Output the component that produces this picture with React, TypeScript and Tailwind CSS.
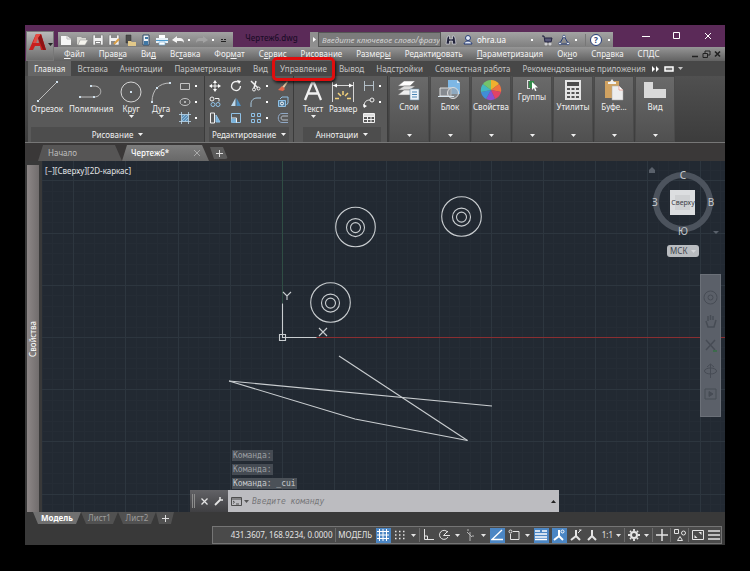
import { ReactNode } from 'react';

const menus = [
  ['', 'Ф', 'айл'],
  ['Прав', 'к', 'а'],
  ['Ви', 'д', ''],
  ['Вс', 'т', 'авка'],
  ['Фор', 'м', 'ат'],
  ['С', 'е', 'рвис'],
  ['', 'Р', 'исование'],
  ['Размер', 'ы', ''],
  ['Редакти', 'р', 'овать'],
  ['', 'П', 'араметризация'],
  ['Ок', 'н', 'о'],
  ['Спр', 'а', 'вка'],
  ['СПДС', '', ''],
];

const ribbonTabs = [
  'Главная',
  'Вставка',
  'Аннотации',
  'Параметризация',
  'Вид',
  'Управление',
  'Вывод',
  'Надстройки',
  'Совместная работа',
  'Рекомендованные приложения',
];

type IconProps = { w?: number; h?: number; children: ReactNode; className?: string };

function Icon({ w = 12, h = 12, children, className = '' }: IconProps) {
  return (
    <svg
      width={w}
      height={h}
      viewBox={`0 0 ${w} ${h}`}
      fill="none"
      stroke="currentColor"
      className={`shrink-0 ${className}`}
      aria-hidden="true"
    >
      {children}
    </svg>
  );
}

function Caret({ className = '' }: { className?: string }) {
  return (
    <Icon w={5} h={3} className={className}>
      <path d="M0 0h5L2.5 3z" fill="currentColor" stroke="none" />
    </Icon>
  );
}

function QuickAccess() {
  return (
    <div className="ml-1 flex h-[15px] items-center gap-1 self-end bg-gradient-to-b from-[#a3a3a3] to-[#7b7b7b] pr-1 pl-[2px] text-[#eeeeee]">
      <button aria-label="Создать">
        <Icon>
          <path d="M1 2h6l4 3v6H1z" fill="#f6f6f6" stroke="none" />
          <path d="M7 2v3h4" stroke="#bbb" />
        </Icon>
      </button>
      <button aria-label="Открыть">
        <Icon>
          <path d="M1 10V3h4l1 1h4v2H4l-2 5z" fill="#d9d9d4" stroke="none" />
          <path d="M4 6h8l-3 5H2z" fill="#f5f4ee" stroke="#999" strokeWidth=".5" />
        </Icon>
      </button>
      <button aria-label="Сохранить">
        <Icon>
          <path d="M1 1h10v10H1z" fill="#f1f1f1" stroke="#777" strokeWidth=".6" />
          <path d="M3 1h6v3H3zM3 7h6v4H3z" fill="#8a8a8a" stroke="none" />
          <path d="M4 8.5h4" stroke="#fff" />
        </Icon>
      </button>
      <button aria-label="Сохранить как">
        <Icon>
          <path d="M1 1h10v10H1z" fill="#f1f1f1" stroke="#777" strokeWidth=".6" />
          <path d="M3 1h6v3H3zM3 7h4v4H3z" fill="#8a8a8a" stroke="none" />
          <path d="M6 10l5-5" stroke="#d99e46" strokeWidth="2" />
        </Icon>
      </button>
      <button aria-label="Открыть из облака">
        <Icon>
          <path d="M2 1h5v8H2z" fill="#4b4b4b" stroke="#333" strokeWidth=".5" />
          <path d="M4 7h3l1 1h4v4H4z" fill="#e2c889" stroke="none" />
        </Icon>
      </button>
      <button aria-label="Сохранить в облаке">
        <Icon>
          <path d="M3 1h6v10H3z" fill="#f0f4f8" stroke="#2f4b68" />
          <path d="M5 3h3v2H5zM4 7h4v4H4z" fill="#3f77a5" stroke="none" />
        </Icon>
      </button>
      <button aria-label="Печать">
        <Icon>
          <path d="M3 1h6v3H3z" fill="#fff" stroke="none" />
          <path d="M0 4h12v5H0z" fill="#e8f1f8" stroke="none" />
          <path d="M0 6.5h12" stroke="#4d9cd0" />
          <path d="M3 8h6v3H3z" fill="#fff" stroke="#6aa9d3" strokeWidth=".6" />
        </Icon>
      </button>
      <button aria-label="Отменить" className="flex items-center gap-1">
        <Icon>
          <path d="M0 6l5-4v2h2c4 0 5 2 5 5-1-2-2-2-5-2H5v2z" fill="#f4f4f4" stroke="none" />
        </Icon>
        <span className="size-[2px] bg-white" />
      </button>
      <button aria-label="Повторить" className="ml-[2px] flex items-center gap-1 text-[#a3a3a3]">
        <Icon>
          <path d="M12 6L7 2v2H5C1 4 0 6 0 9c1-2 2-2 5-2h2v2z" fill="currentColor" stroke="none" />
        </Icon>
        <span className="size-[2px] bg-white" />
      </button>
      <button aria-label="Настройка панели">
        <Icon w={11}>
          <path d="M3 5.5h2M6 5.5h2M3 7.5h5" stroke="#222" />
        </Icon>
      </button>
    </div>
  );
}

function InfoCenter() {
  return (
    <div className="flex h-[15px] w-[172px] items-center self-end bg-gradient-to-b from-[#a3a3a3] to-[#7f7f7f] text-white">
      <button aria-label="Поиск" className="ml-1">
        <Icon>
          <path d="M1 10l1-6 1-2h1.5v3h3V2H9l1 2 1 6H7.5V7h-3v3z" fill="#22233a" stroke="#e8e8f0" strokeWidth=".6" />
        </Icon>
      </button>
      <button className="ml-[5px] flex items-center gap-[3px]">
        <Icon>
          <circle cx="6" cy="4" r="2.5" fill="#dfe7f5" stroke="#273d77" />
          <path d="M2 10c1-4 7-4 8 0z" fill="#dfe7f5" stroke="#273d77" />
        </Icon>
        ohra.ua
      </button>
      <span className="mr-1 ml-auto size-[2px] bg-white" />
      <button aria-label="Магазин приложений" className="ml-1">
        <Icon>
          <path d="M1 2h2l1 6h6l1-4H4" fill="#59597a" stroke="#22233f" />
          <circle cx="5" cy="10" r="1" fill="#22233f" />
          <circle cx="9" cy="10" r="1" fill="#22233f" />
        </Icon>
      </button>
      <button aria-label="Autodesk" className="ml-[5px] flex items-center gap-[5px]">
        <Icon>
          <path d="M6 2l4.5 8h-9z" stroke="#273d77" />
          <circle cx="6" cy="2.5" r="1.3" fill="#fff" stroke="#273d77" strokeWidth=".7" />
          <circle cx="2" cy="9.5" r="1.3" fill="#fff" stroke="#273d77" strokeWidth=".7" />
          <circle cx="10" cy="9.5" r="1.3" fill="#fff" stroke="#273d77" strokeWidth=".7" />
        </Icon>
        <span className="size-[2px] bg-white" />
      </button>
      <span className="mr-1 ml-2 h-3 w-px bg-[#777777]" />
      <button aria-label="Справка" className="mr-[3px] flex items-center gap-[6px]">
        <span className="flex size-[12px] items-center justify-center rounded-full border border-[#273d77] bg-white text-[8px] font-bold text-[#273d77]">
          ?
        </span>
        <span className="size-[2px] bg-white" />
      </button>
    </div>
  );
}

function Header() {
  return (
    <header className="flex bg-[#5b2a58]">
      <button
        aria-label="Меню приложения"
        className="mt-[6px] ml-px flex h-[30px] w-7 items-start gap-px border border-[#777777] bg-gradient-to-b from-[#b9b9b9] to-[#6d6d6d] pt-px pl-[2px]"
      >
        <svg width="18" height="18" viewBox="0 0 18 18" aria-hidden="true">
          <path d="M0 17L7 1h5l5 16h-5l-1-4H6l-2 4z" fill="#c8201f" />
          <path d="M7 1h5l-5 9H4z" fill="#e44c43" />
          <path d="M9 5l-2 5h3z" fill="#9d8585" />
          <path d="M12 1l5 16h-3L9 5z" fill="#8e1214" />
        </svg>
        <Caret className="mt-[10px] text-[#222222]" />
      </button>
      <div className="flex min-w-0 grow flex-col">
        <div className="flex h-[22px]">
          <QuickAccess />
          <h1 className="w-[77px] self-end pb-[3px] text-center font-medium text-[#1d0d29]">Чертеж6.dwg</h1>
          <button
            aria-label="Развернуть поиск"
            className="flex h-[15px] w-2 items-center justify-center self-end bg-[#8f8f8f] text-white"
          >
            <Icon w={3} h={5}>
              <path d="M0 0v5l3-2.5z" fill="currentColor" stroke="none" />
            </Icon>
          </button>
          <input
            aria-label="Поиск"
            placeholder="Введите ключевое слово/фразу"
            className="h-[15px] w-0 grow self-end border border-[#555555] bg-[#7b7b7b] pl-[3px] italic placeholder:text-[#d2d2d2]"
          />
          <InfoCenter />
          <div className="flex w-[112px] items-center justify-between pr-[13px] pl-[29px] text-white">
            <button aria-label="Свернуть">
              <Icon w={8} h={8}>
                <path d="M0 4.5h8" />
              </Icon>
            </button>
            <button aria-label="Развернуть">
              <Icon w={8} h={8}>
                <path d="M.5.5h6v6h-6z" />
              </Icon>
            </button>
            <button aria-label="Закрыть">
              <Icon w={8} h={8}>
                <path d="M1 1l6 6M7 1L1 7" />
              </Icon>
            </button>
          </div>
        </div>
        <nav className="flex h-[14px] items-center gap-[14px] bg-gradient-to-b from-[#969696] to-[#626262] pl-[10px] text-[#f2f2f2]">
          {menus.map(([before, key, after]) => (
            <button key={before + key + after}>
              {before}
              <u>{key}</u>
              {after}
            </button>
          ))}
          <div className="mr-1 ml-auto flex gap-[3px] text-[#222222]">
            <Icon w={7} h={8}>
              <path d="M0 6.5h6" strokeWidth="1.5" />
            </Icon>
            <Icon w={9} h={8}>
              <path d="M3 3V1h5v4H6M1 3.5h4.5v4H1z" />
            </Icon>
            <Icon w={7} h={8}>
              <path d="M1 1.5l5 5M6 1.5l-5 5" strokeWidth="1.7" />
            </Icon>
          </div>
        </nav>
      </div>
    </header>
  );
}

function RibbonTabs() {
  return (
    <div className="flex h-[15px] items-stretch bg-[#474747] pl-[3px] text-[#c4c4c4]">
      {ribbonTabs.map((tab) => (
        <button
          key={tab}
          className={tab === 'Главная' ? 'bg-[#666666] px-[6px] text-[#f0f0f0]' : 'relative px-[6px]'}
        >
          {tab}
          {tab === 'Управление' && (
            <span className="absolute -inset-x-[2px] -top-1 z-10 h-6 rounded-[5px] border-[3px] border-[#e00d0d] shadow-[1px_2px_3px_rgba(0,0,0,0.7)]" />
          )}
        </button>
      ))}
      <button aria-label="Ещё вкладки">
        <Icon w={7} h={6}>
          <path d="M0 0l3 3-3 3zM4 0l3 3-3 3z" fill="#fff" stroke="none" />
        </Icon>
      </button>
      <button aria-label="Свернуть ленту" className="ml-[5px] flex items-center gap-1">
        <Icon w={10} h={6}>
          <path d="M1 1h8v4H1z" fill="#777" stroke="#fff" strokeWidth="1.5" />
        </Icon>
        <Caret />
      </button>
    </div>
  );
}

function BigTool({ label, children, caret }: { label: string; children: ReactNode; caret?: boolean }) {
  return (
    <button className="flex flex-col items-center self-start pt-[3px]">
      <span className="flex h-[25px] items-center">{children}</span>
      <span className="leading-[10px]">{label}</span>
      {caret && <Caret className="mt-px" />}
    </button>
  );
}

function SmallTool({ label, children, dot = true }: { label: string; children: ReactNode; dot?: boolean }) {
  return (
    <button aria-label={label} className="flex h-4 items-center gap-1">
      {children}
      {dot && <span className="size-[2px] bg-white" />}
    </button>
  );
}

function Panel({ title, children, className }: { title: string; children: ReactNode; className: string }) {
  return (
    <section className={`flex flex-col border-r border-[#3b3b3b] bg-[#595959] ${className}`}>
      <div className="flex grow justify-between">{children}</div>
      <button className="flex h-[15px] items-center justify-center gap-[5px] bg-[#4d4d4d]">
        {title}
        <Caret />
      </button>
    </section>
  );
}

function Tile({ label, children, small }: { label: string; children: ReactNode; small?: boolean }) {
  return (
    <button className="mr-px flex w-10 flex-col items-center border border-[#4a4a4a] bg-gradient-to-b from-[#6a6a6a] to-[#505050] pt-[2px]">
      <span className={small ? 'flex h-3 items-center' : 'flex h-[22px] items-center'}>{children}</span>
      <span className="mt-px leading-[10px]">{label}</span>
      <Caret className="mt-auto mb-1" />
    </button>
  );
}

function Ribbon() {
  return (
    <div className="flex h-[66px] bg-gradient-to-b from-[#505050] to-[#3c3c3c] pl-[3px] text-[#f0f0f0]">
      <Panel title="Рисование" className="w-[177px] pl-[3px]">
        <BigTool label="Отрезок">
          <Icon w={24} h={24} className="text-[#bdbdbd]">
            <path d="M3 21L22 2" />
            <path d="M2 20h2v2H2zM21 1h2v2h-2z" fill="#cfe0ec" stroke="none" />
          </Icon>
        </BigTool>
        <BigTool label="Полилиния">
          <Icon w={24} h={24} className="text-[#bdbdbd]">
            <path d="M1 17h14c9 0 9-11 0-11h-3" />
            <path d="M0 16h2v2H0zM14 16h2v2h-2zM11 5h2v2h-2z" fill="#cfe0ec" stroke="none" />
          </Icon>
        </BigTool>
        <BigTool label="Круг" caret>
          <Icon w={24} h={24} className="text-[#d5d5d5]">
            <circle cx="12" cy="12" r="10" />
            <path d="M11 11h2v2h-2z" fill="#cfe0ec" stroke="none" />
          </Icon>
        </BigTool>
        <BigTool label="Дуга" caret>
          <Icon w={24} h={24} className="text-[#bdbdbd]">
            <path d="M3 22C3 10 10 3 21 3" />
            <path d="M2 21h2v2H2zM20 2h2v2h-2zM7 7h2v2H7z" fill="#cfe0ec" stroke="none" />
          </Icon>
        </BigTool>
        <div className="pt-[2px] pr-[7px]">
          <SmallTool label="Прямоугольник">
            <Icon>
              <path d="M1.5 3.5h9v6h-9z" stroke="#c4c4c4" />
            </Icon>
          </SmallTool>
          <SmallTool label="Эллипс">
            <Icon>
              <ellipse cx="6" cy="6" rx="5" ry="3.5" stroke="#c4c4c4" />
              <circle cx="6" cy="6" r=".5" />
            </Icon>
          </SmallTool>
          <SmallTool label="Штриховка">
            <Icon>
              <path d="M2.5 2.5h7v7h-7z" fill="#5d8fb5" stroke="none" />
              <path d="M0 2.5h12M0 9.5h12M2.5 0v12M9.5 0v12" stroke="#bcd9ee" strokeWidth=".8" />
              <path d="M3 9l6-6M3 6l3-3M6 9l3-3" stroke="#a8d0ef" strokeWidth=".7" />
            </Icon>
          </SmallTool>
        </div>
      </Panel>

      <Panel title="Редактирование" className="w-[89px] px-1">
        <div className="pt-[2px]">
          <SmallTool label="Перенести" dot={false}>
            <Icon>
              <path d="M6 2v8M2 6h8" />
              <path d="M6 0l2 3H4zM6 12l2-3H4zM0 6l3-2v4zM12 6L9 4v4z" fill="#fff" stroke="none" />
            </Icon>
          </SmallTool>
          <SmallTool label="Копировать" dot={false}>
            <Icon>
              <circle cx="3" cy="3" r="2" />
              <circle cx="4" cy="8.5" r="2" stroke="#8fc1e6" />
              <circle cx="9" cy="8.5" r="2" stroke="#8fc1e6" />
              <path d="M6 2.5h4v3" />
            </Icon>
          </SmallTool>
          <SmallTool label="Растянуть" dot={false}>
            <Icon>
              <path d="M1.5 1v10h4V1z" />
              <path d="M7 3l4 7H7z" fill="#79b0d8" stroke="#8fc1e6" />
            </Icon>
          </SmallTool>
        </div>
        <div className="pt-[2px]">
          <SmallTool label="Повернуть" dot={false}>
            <Icon>
              <path d="M8 2a4.5 4.5 0 1 0 2.5 4" strokeWidth="1.3" />
              <path d="M7 0l4 1-2 3z" fill="#fff" stroke="none" />
            </Icon>
          </SmallTool>
          <SmallTool label="Зеркало" dot={false}>
            <Icon>
              <path d="M5.5 2v8H1z" fill="#bcd9ee" stroke="none" />
              <path d="M6.5 2v8H11z" fill="#4d8ec0" stroke="none" />
            </Icon>
          </SmallTool>
          <SmallTool label="Масштаб" dot={false}>
            <Icon>
              <path d="M1.5 1.5h9v9h-9z" stroke="#8fc1e6" />
              <path d="M1.5 6h5v4.5" />
              <path d="M2 6.5h4v4H2z" fill="#79b0d8" stroke="none" />
            </Icon>
          </SmallTool>
        </div>
        <div className="pt-[2px]">
          <SmallTool label="Обрезать">
            <Icon>
              <path d="M1 1l7 7M6 1L4 8" strokeWidth="1.5" />
              <circle cx="4" cy="9.5" r="1.5" />
              <circle cx="8.5" cy="8.5" r="1.5" />
            </Icon>
          </SmallTool>
          <SmallTool label="Сопряжение">
            <Icon>
              <path d="M1 11V8c0-4 3-6 6-6h4" stroke="#a9c9e0" />
            </Icon>
          </SmallTool>
          <SmallTool label="Массив">
            <Icon>
              <path d="M1.5 1.5h3v3h-3zM7.5 1.5h3v3h-3zM1.5 7.5h3v3h-3zM7.5 7.5h3v3h-3z" stroke="#8fc1e6" />
            </Icon>
          </SmallTool>
        </div>
        <div className="pt-[2px]">
          <SmallTool label="Стереть" dot={false}>
            <Icon>
              <path d="M5 7l5-6 1 1-4 6z" fill="#e3c9a3" stroke="none" />
              <path d="M1 10l4-4 3 3-2 2z" fill="#e4674b" stroke="none" />
            </Icon>
          </SmallTool>
          <SmallTool label="Расчленить" dot={false}>
            <Icon>
              <path d="M1.5 4.5h7v6h-7z" fill="#537b9a" stroke="#8fc1e6" />
              <path d="M3 3l2-2h6v6L9.5 9" stroke="#8fc1e6" />
              <circle cx="5" cy="7.5" r="1.5" stroke="#fff" />
            </Icon>
          </SmallTool>
          <SmallTool label="Подобие" dot={false}>
            <Icon>
              <path d="M11 1.5H5c-5 0-5 9 0 9h6" stroke="#8fa8c6" />
              <path d="M11 4H6C3.5 4 3.5 8 6 8h5" stroke="#b7c1cc" />
            </Icon>
          </SmallTool>
        </div>
      </Panel>

      <Panel title="Аннотации" className="w-[94px] pr-[6px] pl-[9px]">
        <BigTool label="Текст" caret>
          <Icon w={20} h={24}>
            <path d="M2 20L9 3h2l7 17M5 13.5h10" strokeWidth="2.3" />
          </Icon>
        </BigTool>
        <BigTool label="Размер">
          <Icon w={24} h={24} className="text-[#d5d5d5]">
            <path d="M1.5 2v20M22.5 2v20M2 5.5h20" />
            <path d="M2 5.5l4-2v4zM22 5.5l-4-2v4z" fill="#fff" stroke="none" />
            <path d="M4 18.5h4M16 18.5h4M7 13l3 3M17 13l-3 3M12 11v4" stroke="#f4d27c" strokeWidth="1.5" />
          </Icon>
        </BigTool>
        <div className="pt-[2px]">
          <SmallTool label="Линейный">
            <Icon>
              <path d="M1.5 1v10M10.5 1v10M2 5.5h8" stroke="#b3bfc7" />
            </Icon>
          </SmallTool>
          <SmallTool label="Выноска">
            <Icon>
              <path d="M1 11c0-5 2-7 6-7" />
              <circle cx="9" cy="4" r="2" />
              <path d="M0 8l1 4 3-2z" fill="#fff" stroke="none" />
            </Icon>
          </SmallTool>
          <SmallTool label="Таблица" dot={false}>
            <Icon>
              <path d="M.5 1.5h11v9H.5zM.5 4.5h11M.5 7.5h11M4.5 4v6M8 4v6" />
              <path d="M1 2h10v2H1z" fill="#ddd" stroke="none" />
            </Icon>
          </SmallTool>
        </div>
      </Panel>

      <div className="ml-px flex">
        <Tile label="Слои">
          <Icon w={24} h={22}>
            <path d="M1 7l6-5h11l-5 5z" fill="#fff" stroke="#777" strokeWidth=".5" />
            <path d="M1 11l6-4h11l-5 4z" fill="#ddd" stroke="#777" strokeWidth=".5" />
            <path d="M1 16l6-5h11l-5 5z" fill="#eee" stroke="#777" strokeWidth=".5" />
            <path d="M13 10h9v11h-9z" fill="#eef4f9" stroke="#6a8aa3" strokeWidth=".6" />
            <path d="M15 13h5M15 15.5h5M15 18h5" stroke="#4b85b5" />
          </Icon>
        </Tile>
        <Tile label="Блок">
          <Icon w={24} h={22}>
            <path d="M10 1h9l3 3v11H10z" fill="#7db7e5" stroke="none" />
            <path d="M19 1v3h3" fill="#d4e9f9" stroke="none" />
            <path d="M2 9h11v8H2z" fill="#858a90" stroke="#ddd" />
            <circle cx="15" cy="14" r="5.5" fill="#9aa0a6" fillOpacity=".6" stroke="#ddd" />
            <path d="M0 17.5h16" stroke="#d7e5ef" />
          </Icon>
        </Tile>
        <Tile label="Свойства">
          <Icon w={22} h={22} className="[stroke:none]">
            <path d="M11 11V1a10 10 0 0 1 8 4z" fill="#f0b02e" />
            <path d="M11 11l8-6a10 10 0 0 1 2 8z" fill="#ee7440" />
            <path d="M11 11l10 2a10 10 0 0 1-6 7z" fill="#e14366" />
            <path d="M11 11l4 9a10 10 0 0 1-9 0z" fill="#8b4fd3" />
            <path d="M11 11l-5 9a10 10 0 0 1-5-7z" fill="#408ed8" />
            <path d="M11 11L1 13a10 10 0 0 1 2-8z" fill="#42b8c0" />
            <path d="M11 11L3 5a10 10 0 0 1 8-4z" fill="#74c36a" />
          </Icon>
        </Tile>
        <Tile label="Группы" small>
          <Icon>
            <path d="M1.5 1v9M1 1.5h3M1 9.5h3" stroke="#e2e2e2" />
            <path d="M3 2h5v7H3z" fill="#338a49" stroke="none" />
            <path d="M6 3v8l2-2 1 3 1.5-.5L9 8.5h3z" fill="#fff" stroke="none" />
          </Icon>
        </Tile>
        <Tile label="Утилиты">
          <Icon w={18} h={22}>
            <path d="M1 1h16v20H1z" fill="#e4e4e4" stroke="none" />
            <path d="M3 3h12v4H3z" fill="#4a4a4a" stroke="none" />
            <path d="M3 10h3M7.5 10h3M12 10h3M3 14h3M7.5 14h3M12 14h3M3 18h3M7.5 18h3M12 18h3" stroke="#555" strokeWidth="2" />
          </Icon>
        </Tile>
        <Tile label="Буфе...">
          <Icon w={20} h={22}>
            <path d="M1 2h14v17H1z" fill="#d0a261" stroke="none" />
            <path d="M4 3h2l2-3 2 3h2v2H4z" fill="#f1f1f1" stroke="none" />
            <path d="M8 7h7l4 4v10H8z" fill="#ededed" stroke="#aaa" strokeWidth=".5" />
            <path d="M15 7v4h4" fill="#fff" stroke="#e27968" strokeWidth=".6" />
          </Icon>
        </Tile>
        <Tile label="Вид">
          <Icon w={22} h={22}>
            <path d="M0 3h9v7h13v9H0z" fill="#d9d9d9" stroke="none" />
          </Icon>
        </Tile>
      </div>
    </div>
  );
}

function DocumentTabs() {
  return (
    <div className="flex h-[19px] items-end border-t border-[#777777] bg-[#3a3838] pl-[13px] text-[#bdbdbd]">
      <button className="h-4 w-[84px] bg-[#565555] pl-[10px] text-left [clip-path:polygon(5px_0,77px_0,100%_100%,0_100%)]">
        Начало
      </button>
      <button className="flex h-4 w-[87px] items-center justify-between bg-gradient-to-b from-[#7d7d7d] to-[#686868] pr-[9px] pl-[9px] font-medium text-white [clip-path:polygon(5px_0,80px_0,100%_100%,0_100%)]">
        Чертеж6*
        <Icon w={6} h={6} className="text-[#aaaaaa]">
          <path d="M0 0l6 6M6 0L0 6" />
        </Icon>
      </button>
      <button
        aria-label="Новый чертёж"
        className="mb-[2px] ml-px flex h-3 w-[18px] items-center justify-center rounded-r-[3px] bg-[#5b5b5b] text-[#dddddd] [clip-path:polygon(0_0,13px_0,100%_100%,4px_100%)]"
      >
        <Icon w={7} h={7}>
          <path d="M0 3.5h7M3.5 0v7" />
        </Icon>
      </button>
    </div>
  );
}

function Donut({ x, y }: { x: number; y: number }) {
  return (
    <g>
      <circle cx={x} cy={y} r="19.8" />
      <circle cx={x} cy={y + 0.6} r="9" />
      <circle cx={x} cy={y + 0.6} r="5" />
    </g>
  );
}

// every fifth line is a major one; the UCS origin sits on a major crossing
const ORIGIN_X = 240;
const ORIGIN_Y = 176;
const STEP = 10.44;
const gridLines = Array.from({ length: 300 }, (_, i) => i - 50);

function Grid({ major }: { major: boolean }) {
  const lines = gridLines.filter((n) => (n % 5 === 0) === major);
  return (
    <g stroke={major ? '#2d363f' : '#252c35'}>
      {lines.map((n) => {
        const x = Math.round(ORIGIN_X + n * STEP) + 0.5;
        return <line key={`x${n}`} x1={x} x2={x} y1="0" y2="100%" />;
      })}
      {lines.map((n) => {
        const y = Math.round(ORIGIN_Y + n * STEP) + 0.5;
        return <line key={`y${n}`} x1="0" x2="100%" y1={y} y2={y} />;
      })}
    </g>
  );
}

function Drawing() {
  return (
    <svg className="absolute inset-0 size-full" aria-label="Чертёж">
      <Grid major={false} />
      <Grid major />
      <line x1="240.5" x2="240.5" y1="0" y2="142" stroke="#2f4d44" />
      <line x1="274" x2="100%" y1="176.5" y2="176.5" stroke="#8a2e31" />
      <g fill="none" stroke="#c9cdd0" strokeWidth="1.1">
        <Donut x={313.5} y={66} />
        <Donut x={419.5} y={55.5} />
        <Donut x={288.5} y={141.5} />
        <path d="M297 195l128.5 84.5" />
        <path d="M187 220l263 25" />
        <path d="M187 220l126 38 112.5 21.5" />
        <path d="M240.5 142.5v34h34" />
        <path d="M237.5 173.5h6v6h-6z" />
        <path d="M241 131l4 4 4-4M245 135v4M277 167l8 8M285 167l-8 8" />
      </g>
    </svg>
  );
}

function ViewCube() {
  return (
    <div className="absolute top-0 right-[5px] flex flex-col items-center text-[#c5c8cc]">
      <svg width="74" height="84" viewBox="0 0 74 84" aria-label="Видовой куб">
        <circle cx="37" cy="41" r="27" fill="none" stroke="#4c535d" strokeWidth="6" />
        <path d="M24 29h25v25H24z" fill="#dcdee0" />
        <path d="M29 34h15v15H29z" fill="#cfd1d3" />
        <g fill="currentColor" fontSize="10" textAnchor="middle">
          <text x="37" y="18">С</text>
          <text x="65" y="45">В</text>
          <text x="9" y="45">З</text>
          <text x="37" y="74">Ю</text>
        </g>
        <text x="37" y="44" fill="#3c4148" fontSize="7" textAnchor="middle">Сверху</text>
        <path d="M3 9l3-3 3 3v3H3z" fill="#59606a" />
        <path d="M67 70h6l-3 3z" fill="#59606a" />
      </svg>
      <button className="flex h-3 w-8 items-center justify-between rounded-[3px] bg-[#b9bcc0] px-[3px] text-[#3f454d]">
        МСК
        <Caret className="text-[#d5d7da]" />
      </button>
    </div>
  );
}

function NavigationBar() {
  return (
    <div className="absolute top-[113px] right-1 flex w-[21px] flex-col items-center gap-2 border border-[#6b7078] bg-[#5b6069] py-[15px] text-[#474c55]">
      <button aria-label="Штурвал">
        <Icon w={15} h={15}>
          <circle cx="7.5" cy="7.5" r="6.5" />
          <circle cx="7.5" cy="7.5" r="2.5" />
        </Icon>
      </button>
      <button aria-label="Панорамирование">
        <Icon w={15} h={16}>
          <path d="M3 8l2 6h6l2-7M5 8V3M7.5 7V2M10 7V3" strokeWidth="1.5" />
        </Icon>
      </button>
      <button aria-label="Зумирование">
        <Icon w={15} h={18}>
          <path d="M3 3l9 10M12 3L3 13" strokeWidth="1.5" />
          <path d="M10 14h4" stroke="#3d6b4c" strokeWidth="2" />
        </Icon>
      </button>
      <button aria-label="Орбита">
        <Icon w={15} h={16}>
          <ellipse cx="7.5" cy="8" rx="6" ry="3" />
          <path d="M7.5 1v14M4 4l3.5-3L11 4" />
        </Icon>
      </button>
      <button aria-label="ShowMotion">
        <Icon w={15} h={14}>
          <path d="M2 2h11v10H2z" />
          <path d="M6 4.5l4 2.5-4 2.5z" fill="currentColor" />
        </Icon>
      </button>
    </div>
  );
}

function CommandLine() {
  return (
    <div className="absolute right-[166px] bottom-0 left-[148px]">
      <div className="mb-px ml-[42px] flex flex-col items-start gap-[3px] font-['DejaVu_Sans_Mono',monospace] leading-[11px] text-[#9a9ea2]">
        <span className="bg-[#454b53] px-px">Команда:</span>
        <span className="bg-[#454b53] px-px">Команда:</span>
        <span className="bg-[#4b5158] px-px text-[#c5c8cb]">Команда: _cui</span>
      </div>
      <div className="flex h-[22px]">
        <div className="flex w-[38px] items-center gap-[6px] bg-gradient-to-b from-[#626266] to-[#3f3f42] pl-[2px] text-[#e4e4e4]">
          <span className="h-[14px] w-[3px] border-x border-[#8c8c8c]" />
          <button aria-label="Закрыть">
            <Icon w={7} h={7}>
              <path d="M.5.5l6 6M6.5.5l-6 6" strokeWidth="1.3" />
            </Icon>
          </button>
          <button aria-label="Настройка">
            <Icon w={10} h={10}>
              <path d="M1 9l5-5" strokeWidth="1.8" />
              <path d="M6 1v3h3" strokeWidth="1.5" />
            </Icon>
          </button>
        </div>
        <div className="flex grow items-center gap-[2px] bg-[#bcbcc0] pr-[3px] pl-[3px]">
          <Icon w={11} h={9} className="text-[#4d4d4d]">
            <path d="M.5.5h10v8H.5zM.5 2h10M2 4l1.5 1.2L2 6.5M5 7h3" />
          </Icon>
          <Caret className="text-[#555555]" />
          <input
            aria-label="Команда"
            placeholder="Введите команду"
            className="h-full w-0 grow pl-px font-['DejaVu_Sans_Mono',monospace] italic placeholder:text-[#77777a]"
          />
          <Caret className="rotate-180 text-[#222222]" />
        </div>
      </div>
    </div>
  );
}

function LayoutTabs() {
  return (
    <div className="flex h-3 items-start bg-[#393939] pl-2 text-[#9c9c9c]">
      <button className="h-3 w-[48px] bg-[#707070] font-bold text-white [clip-path:polygon(0_0,100%_0,43px_100%,5px_100%)]">
        Модель
      </button>
      <button className="h-3 w-[37px] bg-[#515151] [clip-path:polygon(0_0,100%_0,32px_100%,5px_100%)]">
        Лист1
      </button>
      <button className="h-3 w-[38px] bg-[#515151] [clip-path:polygon(0_0,100%_0,33px_100%,5px_100%)]">
        Лист2
      </button>
      <button
        aria-label="Новый лист"
        className="flex h-3 w-[18px] items-center justify-center bg-[#515151] text-[#dddddd] [clip-path:polygon(0_0,100%_0,15px_100%,3px_100%)]"
      >
        <Icon w={7} h={7}>
          <path d="M0 3.5h7M3.5 0v7" />
        </Icon>
      </button>
    </div>
  );
}

type ToolProps = { label: string; children: ReactNode; active?: boolean };

function StatusTool({ label, children, active }: ToolProps) {
  return (
    <button
      aria-label={label}
      className={
        active
          ? 'mx-px flex h-[15px] w-[15px] shrink-0 items-center justify-center bg-[#4b86c4] text-white'
          : 'flex h-[15px] w-[15px] shrink-0 items-center justify-center'
      }
    >
      {children}
    </button>
  );
}

function Divider() {
  return <span className="h-[14px] w-px shrink-0 bg-[#6b6b6b]" />;
}

function StatusBar() {
  return (
    <footer className="flex justify-end bg-[#393939] pt-[2px] pr-[3px] pb-px">
      <div className="flex h-[18px] items-center gap-px border border-[#757575] bg-[#4a4a4a] pl-[18px] text-[#e4e4e4]">
        <span className="mr-px w-[102px] whitespace-nowrap">431.3607, 168.9234, 0.0000</span>
        <Divider />
        <button className="w-[37px] text-center">МОДЕЛЬ</button>
        <StatusTool label="Сетка" active>
          <Icon>
            <path d="M2.5 0v12M6 0v12M9.5 0v12M0 2.5h12M0 6h12M0 9.5h12" />
          </Icon>
        </StatusTool>
        <StatusTool label="Шаг">
          <Icon>
            <path d="M1 2.5h11M1 6h11M1 9.5h11" strokeDasharray="1.5 2.5" strokeWidth="1.5" />
          </Icon>
        </StatusTool>
        <Caret className="mx-[2px]" />
        <Divider />
        <StatusTool label="Орто">
          <Icon>
            <path d="M2.5 0v10.5H12M2.5 7h3v3" />
          </Icon>
        </StatusTool>
        <StatusTool label="Полярное отслеживание">
          <Icon>
            <path d="M9.5 3A4.5 4.5 0 1 0 10 8M5.5 6.5H12M5.5 6.5L10 2" />
          </Icon>
        </StatusTool>
        <Caret className="mx-[2px]" />
        <StatusTool label="Изометрия">
          <Icon className="text-[#b5b5b5]">
            <path d="M6 3v9M3 3l5 5M8 7h2M4 0v2" />
          </Icon>
        </StatusTool>
        <Caret className="mx-[2px]" />
        <StatusTool label="Отслеживание" active>
          <Icon>
            <path d="M11 1L1 10.5h11" strokeWidth="1.3" />
          </Icon>
        </StatusTool>
        <StatusTool label="Привязка">
          <Icon>
            <path d="M5 2.5h6v8H2.5V5" />
            <circle cx="2.5" cy="2.5" r="1.5" />
          </Icon>
        </StatusTool>
        <Caret className="mx-[2px]" />
        <StatusTool label="Вес линий" active>
          <Icon>
            <path d="M0 2h5M7 2h5M0 5h12M0 8h12M0 10.5h12" strokeWidth="1.5" />
          </Icon>
        </StatusTool>
        <StatusTool label="Аннотации" active>
          <Icon>
            <path d="M6 1v6l-5 4M6 7l4 4" strokeWidth="2" />
            <circle cx="9.5" cy="2.5" r="1.5" />
          </Icon>
        </StatusTool>
        <StatusTool label="Автомасштаб">
          <Icon>
            <path d="M6 1v6l-5 4M6 7l4 4" strokeWidth="2" />
            <path d="M8 4l3-3M9 1h2.5" />
          </Icon>
        </StatusTool>
        <StatusTool label="Масштаб аннотаций">
          <Icon>
            <path d="M6 1v6l-4 4M6 7l4 4" strokeWidth="2" />
          </Icon>
        </StatusTool>
        <span className="ml-px">1:1</span>
        <Caret className="mx-[2px]" />
        <Divider />
        <StatusTool label="Параметры">
          <Icon>
            <circle cx="6" cy="6" r="3" strokeWidth="2" />
            <path d="M6 0v2M6 10v2M0 6h2M10 6h2M2 2l1 1M9 9l1 1M10 2L9 3M3 9l-1 1" strokeWidth="1.8" />
          </Icon>
        </StatusTool>
        <Caret className="mx-[2px]" />
        <Divider />
        <StatusTool label="Монитор аннотаций">
          <Icon>
            <path d="M6 0v12M0 6h12" strokeWidth="1.5" />
          </Icon>
        </StatusTool>
        <Divider />
        <StatusTool label="Изоляция объектов">
          <Icon>
            <path d="M.5.5h4v4h-4zM6 7.5L8.5 11.5H3.5z" />
            <circle cx="9.5" cy="4" r="2" />
          </Icon>
        </StatusTool>
        <Divider />
        <StatusTool label="Очистить экран">
          <Icon>
            <path d="M.5 1.5h11v9H.5z" />
            <path d="M9.5 3v3l-3-3zM2.5 9V6l3 3z" fill="currentColor" stroke="none" />
          </Icon>
        </StatusTool>
        <StatusTool label="Адаптация">
          <Icon>
            <path d="M0 2h12M0 6h12M0 10h12" strokeWidth="1.5" />
          </Icon>
        </StatusTool>
      </div>
    </footer>
  );
}

export default function App() {
  return (
    <div className="flex min-h-screen flex-col bg-black px-[25px] pt-[25px] pb-[26px] font-['Noto_Sans','Open_Sans',sans-serif] text-[8px] leading-3">
      <main className="flex grow flex-col bg-[#393939]">
        <Header />
        <RibbonTabs />
        <Ribbon />
        <DocumentTabs />
        <div className="flex grow">
          <aside className="mt-1 mr-[3px] ml-[2px] flex w-3 items-center justify-center bg-gradient-to-r from-[#8d8787] to-[#716d6d] text-white">
            <span className="rotate-180 [writing-mode:vertical-rl]">Свойства</span>
          </aside>
          <div className="relative grow overflow-hidden bg-[#222932]">
            <Drawing />
            <span className="absolute top-1 left-[3px] text-[#e1e3e5]">[−][Сверху][2D-каркас]</span>
            <ViewCube />
            <NavigationBar />
            <CommandLine />
          </div>
        </div>
        <LayoutTabs />
        <StatusBar />
      </main>
    </div>
  );
}
